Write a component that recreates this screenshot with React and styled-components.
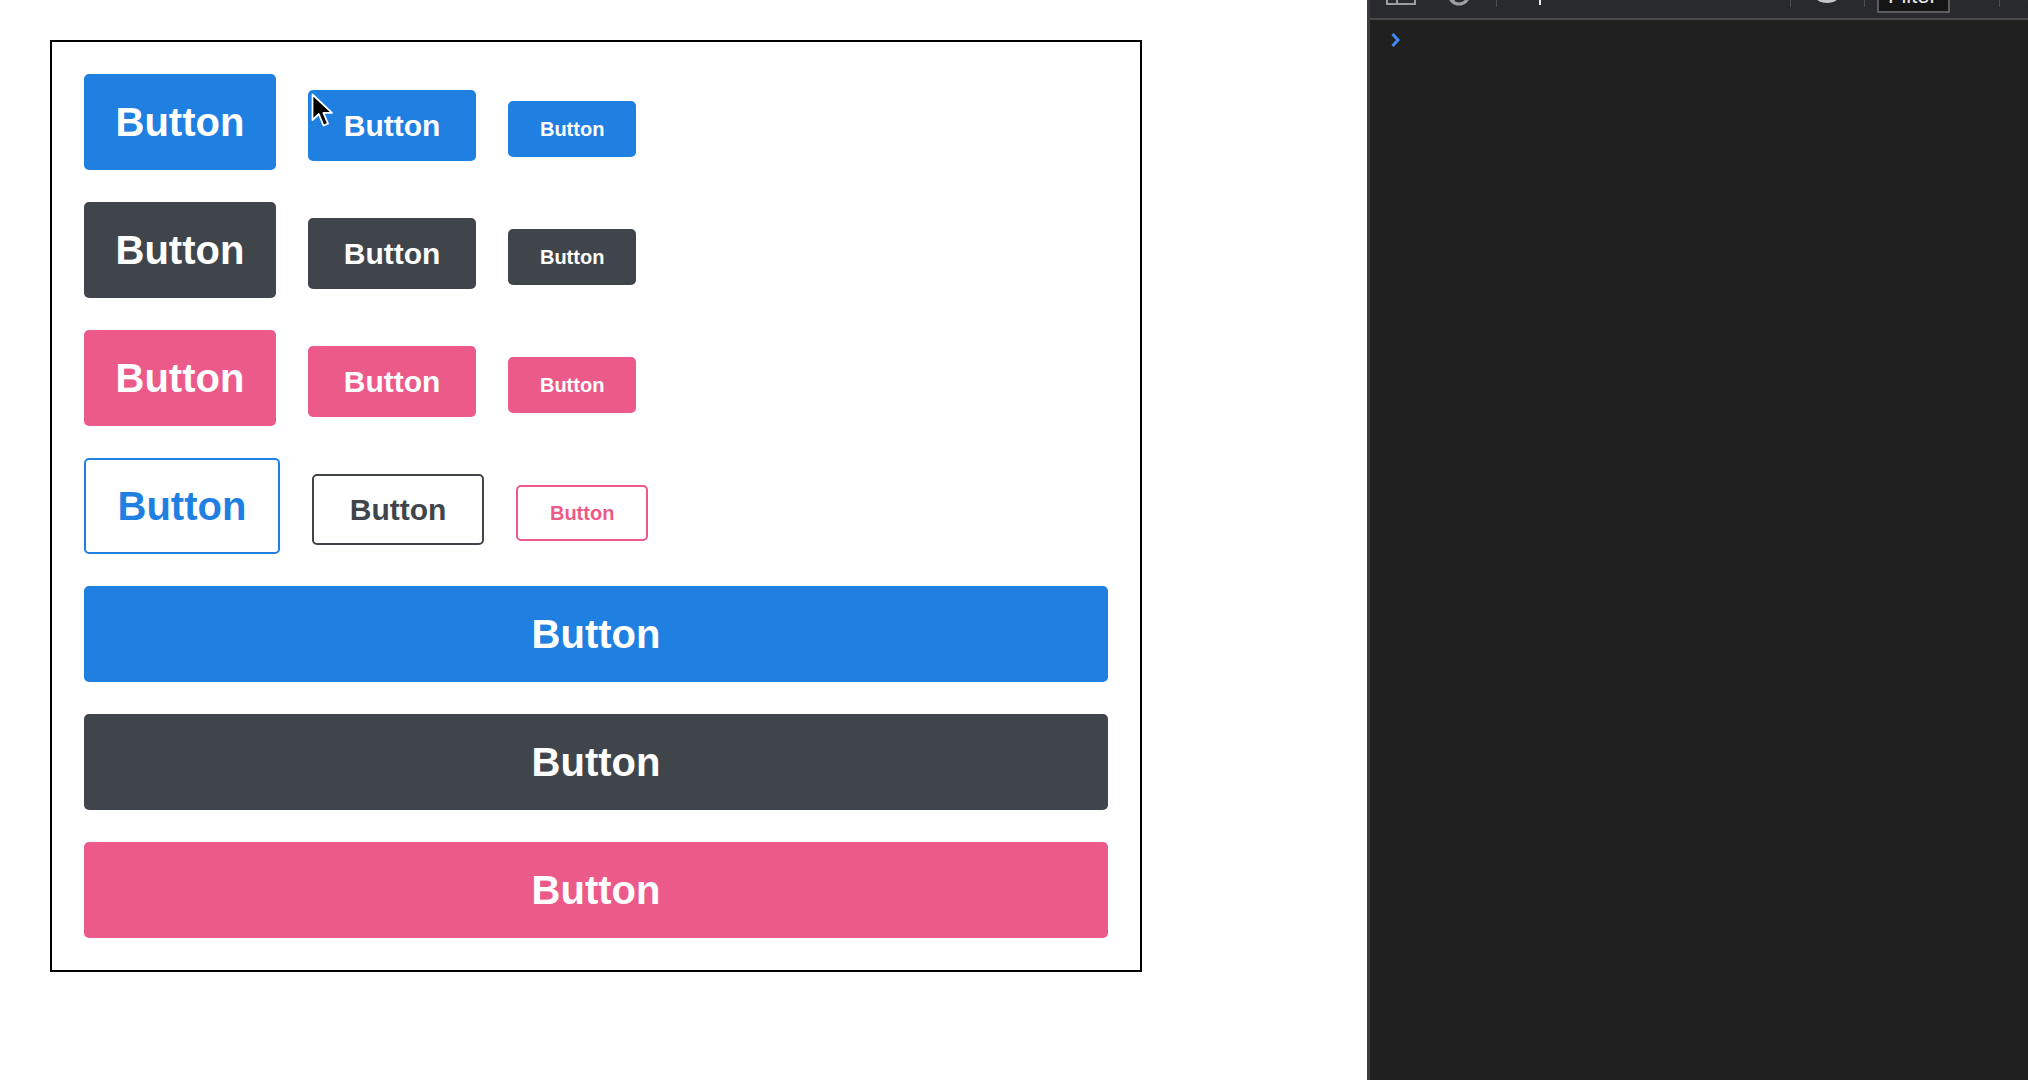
import React from 'react';
import styled, { createGlobalStyle, css } from 'styled-components';

const GlobalStyle = createGlobalStyle`
  html, body {
    margin: 0;
    padding: 0;
    background: #fff;
  }
  * {
    box-sizing: border-box;
  }
`;

const colors = {
  primary: '#1f80e1',
  dark: '#40454b',
  accent: '#ec5a89',
};

const sizes = {
  lg: { font: 40, line: 48, py: 24, px: 31.5 },
  md: { font: 30, line: 35, py: 18, px: 36 },
  sm: { font: 20, line: 24, py: 16, px: 31.5 },
};

const Page = styled.div`
  display: flex;
  width: 2028px;
  height: 1080px;
  overflow: hidden;
`;

const Main = styled.main`
  position: relative;
  flex: 0 0 1367px;
  padding: 40px 0 0 50px;
  background: #fff;
`;

const Board = styled.div`
  width: 1092px;
  border: 2px solid #000;
  padding: 32px;
  display: flex;
  flex-direction: column;
  gap: 32px;
`;

const Row = styled.div`
  display: flex;
  align-items: baseline;
  gap: 32px;
`;

const Button = styled.button`
  font-family: 'Liberation Sans', Arial, sans-serif;
  font-weight: 700;
  font-size: ${p => sizes[p.$size].font}px;
  line-height: ${p => sizes[p.$size].line}px;
  border-radius: 5px;
  cursor: pointer;
  margin: 0;
  text-align: center;
  ${p =>
    p.$outline
      ? css`
          background: #fff;
          color: ${colors[p.$color]};
          border: 2px solid ${colors[p.$color]};
          padding: ${sizes[p.$size].py - 2}px ${sizes[p.$size].px}px;
        `
      : css`
          background: ${colors[p.$color]};
          color: #fff;
          border: none;
          padding: ${sizes[p.$size].py}px ${sizes[p.$size].px}px;
        `}
  ${p =>
    p.$block &&
    css`
      display: block;
      width: 100%;
    `}
`;

const Pointer = styled.svg`
  position: absolute;
  left: 311px;
  top: 93px;
  width: 23px;
  height: 36px;
  pointer-events: none;
`;

const DevTools = styled.aside`
  flex: 1;
  display: flex;
  flex-direction: column;
  background: #202020;
  border-left: 3px solid #3b3b3b;
`;

const Toolbar = styled.div`
  height: 20px;
  display: flex;
  align-items: flex-start;
  padding-left: 16px;
  background: #292a2d;
  border-bottom: 2px solid #494949;
  overflow: hidden;
`;

const Tool = styled.div`
  flex: 0 0 auto;
  margin-left: ${p => p.$ml || 0}px;
  margin-top: ${p => p.$mt || 0}px;
  line-height: 0;
`;

const Sep = styled.div`
  flex: 0 0 1px;
  width: 1px;
  height: 7px;
  margin-left: ${p => p.$ml}px;
  background: #4f4f52;
`;

const Descender = styled.div`
  width: 2px;
  height: 5px;
  margin-left: ${p => p.$ml}px;
  background: #e8e8e8;
`;

const FilterBox = styled.div`
  flex: 0 0 73px;
  height: 30px;
  margin-left: ${p => p.$ml}px;
  margin-top: -17px;
  border: 2px solid #5c5c5c;
  background: #151515;
  color: #e8e8e8;
  font-family: 'Liberation Sans', Arial, sans-serif;
  font-size: 22px;
  line-height: 22px;
  padding-left: 9px;
`;

const Console = styled.div`
  flex: 1;
  padding: 12px 0 0 20px;
`;

const Prompt = styled.svg`
  display: block;
  width: 11px;
  height: 16px;
`;

const Cursor = () => (
  <Pointer viewBox="0 0 23 36">
    <path
      d="M1.5 1.5 L1.5 27 L7.8 21 L12.5 32.5 L17 30.6 L12.4 19.8 L21 19.8 Z"
      fill="#000"
      stroke="#fff"
      strokeWidth="1.8"
      strokeLinejoin="round"
    />
  </Pointer>
);

const rows = ['primary', 'dark', 'accent'];

const App = () => (
  <Page>
    <GlobalStyle />
    <Main>
      <Board>
        {rows.map(c => (
          <Row key={c}>
            <Button $color={c} $size="lg">Button</Button>
            <Button $color={c} $size="md">Button</Button>
            <Button $color={c} $size="sm">Button</Button>
          </Row>
        ))}
        <Row>
          <Button $color="primary" $size="lg" $outline>Button</Button>
          <Button $color="dark" $size="md" $outline>Button</Button>
          <Button $color="accent" $size="sm" $outline>Button</Button>
        </Row>
        {rows.map(c => (
          <Button key={`b-${c}`} $color={c} $size="lg" $block>Button</Button>
        ))}
      </Board>
      <Cursor />
    </Main>
    <DevTools>
      <Toolbar>
        <Tool $mt={-15}>
          <svg width="30" height="20" viewBox="0 0 30 20">
            <rect x="1" y="1" width="28" height="18" fill="none" stroke="#9aa0a6" strokeWidth="2" />
            <line x1="11" y1="1" x2="11" y2="19" stroke="#9aa0a6" strokeWidth="2" />
          </svg>
        </Tool>
        <Tool $ml={31} $mt={-18}>
          <svg width="24" height="24" viewBox="0 0 24 24">
            <circle cx="12" cy="12" r="10" fill="none" stroke="#9aa0a6" strokeWidth="3" />
            <line x1="5" y1="19" x2="19" y2="5" stroke="#9aa0a6" strokeWidth="3" />
          </svg>
        </Tool>
        <Sep $ml={25} />
        <Descender $ml={42} />
        <Sep $ml={249} />
        <Tool $ml={25} $mt={-9}>
          <svg width="22" height="12" viewBox="0 0 22 12">
            <ellipse cx="11" cy="6" rx="11" ry="6" fill="#c4c7c5" />
          </svg>
        </Tool>
        <Sep $ml={26} />
        <FilterBox $ml={12}>Filter</FilterBox>
        <Sep $ml={49} />
        <Tool $ml={26} $mt={-10}>
          <svg width="12" height="14" viewBox="0 0 12 14">
            <circle cx="7" cy="7" r="5" fill="none" stroke="#9aa0a6" strokeWidth="2" />
          </svg>
        </Tool>
      </Toolbar>
      <Console>
        <Prompt viewBox="0 0 11 16">
          <polyline points="2.5,2 8,8 2.5,14" fill="none" stroke="#3d8af7" strokeWidth="3" />
        </Prompt>
      </Console>
    </DevTools>
  </Page>
);

export default App;
